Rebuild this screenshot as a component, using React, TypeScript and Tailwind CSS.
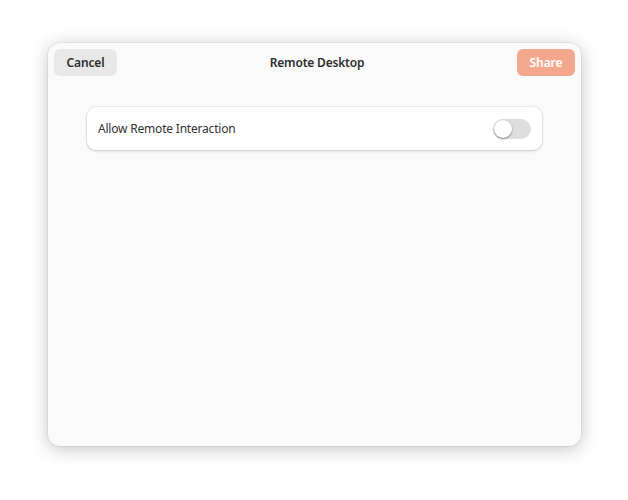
import React from "react";

function Toggle() {
  return (
    <div className="flex h-[20px] w-[38px] items-center rounded-full bg-[#dedede] p-[2px]">
      <div className="h-[18px] w-[18px] rounded-full bg-white shadow-[0_1px_2px_rgba(0,0,0,0.45)] -ml-[1px]" />
    </div>
  );
}

export default function App() {
  return (
    <div
      className="h-[500px] w-[628px] bg-white pl-[48px] pt-[43px]"
      style={{ fontFamily: '"Noto Sans", "Open Sans", sans-serif' }}
    >
      <div className="flex h-[403px] w-[533px] flex-col rounded-[12px] bg-[#fafafa] shadow-[0_3px_18px_rgba(0,0,0,0.24),0_0_0_1px_rgba(0,0,0,0.05)]">
        {/* header */}
        <div className="flex items-center justify-between px-[6px] pt-[6px]">
          <button className="h-[27px] w-[63px] rounded-[6px] bg-[#e8e8e8] text-[12px] font-semibold tracking-[-0.1px] text-[#2e2e2e]">
            Cancel
          </button>
          <div className="text-[12px] font-semibold tracking-[-0.2px] text-[#2e2e2e]">Remote Desktop</div>
          <button className="h-[27px] w-[58px] rounded-[6px] bg-[#f3a88d] text-[12px] font-semibold tracking-[-0.1px] text-white">
            Share
          </button>
        </div>

        {/* content */}
        <div className="px-[39px] pt-[31px]">
          <div className="flex h-[43px] items-center justify-between rounded-[9px] bg-white pl-[11px] pr-[11px] shadow-[0_1px_3px_rgba(0,0,0,0.18),0_0_0_1px_rgba(0,0,0,0.04)]">
            <span className="text-[12px] tracking-[-0.2px] text-[#333333]">Allow Remote Interaction</span>
            <Toggle />
          </div>
        </div>
      </div>
    </div>
  );
}
